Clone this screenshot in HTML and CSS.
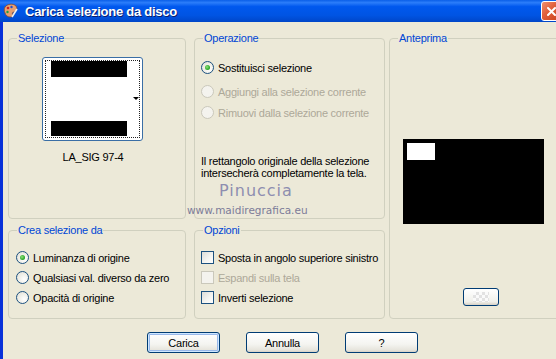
FILE: index.html
```html
<!DOCTYPE html>
<html lang="it">
<head>
    <meta charset="UTF-8">
    <title>Carica selezione da disco</title>
    <link rel="stylesheet" href="styles.css">
</head>
<body>
<div class="window">
    <div class="titlebar">
        <svg class="app-icon" width="16" height="16" viewBox="0 0 16 16">
            <path d="M2 4 C4 1 10 0 13 3 C15 6 13 9 11 9 C9 9 9 11 10 13 C8 15 3 14 2 10 C1 8 1 6 2 4 Z" fill="#e8a070" stroke="#8a4a2a" stroke-width="0.8"/>
            <circle cx="5" cy="5" r="1.3" fill="#d02020"/>
            <circle cx="8.5" cy="4" r="1.2" fill="#2050d0"/>
            <circle cx="4.5" cy="9" r="1.2" fill="#20a040"/>
            <path d="M9 14 L14 6" stroke="#f0f0f0" stroke-width="1.6"/>
        </svg>
        <span class="title">Carica selezione da disco</span>
        <span class="close-btn">
            <svg width="15" height="15" viewBox="0 0 15 15">
                <path d="M4 4 L11 11 M11 4 L4 11" stroke="#fff" stroke-width="2" stroke-linecap="round"/>
            </svg>
        </span>
    </div>
    <div class="content">
        <div class="groups">
            <fieldset class="group group-selezione">
                <legend>Selezione</legend>
                <div class="thumb">
                    <div class="thumb-inner">
                        <div class="bar"></div>
                        <div class="bar"></div>
                    </div>
                    <span class="thumb-arrow"></span>
                </div>
                <div class="thumb-label">LA_SIG 97-4</div>
            </fieldset>

            <fieldset class="group group-operazione">
                <legend>Operazione</legend>
                <label class="opt opt-first"><span class="radio checked"></span>Sostituisci selezione</label>
                <label class="opt opt-second disabled"><span class="radio"></span>Aggiungi alla selezione corrente</label>
                <label class="opt opt-third disabled"><span class="radio"></span>Rimuovi dalla selezione corrente</label>
                <p class="note">Il rettangolo originale della selezione intersecherà completamente la tela.</p>
                <div class="watermark">
                    <span class="wm-name">Pinuccia</span>
                    <span class="wm-site">www.maidiregrafica.eu</span>
                </div>
            </fieldset>

            <fieldset class="group group-anteprima">
                <legend>Anteprima</legend>
                <div class="preview">
                    <div class="preview-sel"></div>
                </div>
                <div class="preview-btn-row">
                    <span class="small-btn"><span class="checker"></span></span>
                </div>
            </fieldset>

            <fieldset class="group group-crea">
                <legend>Crea selezione da</legend>
                <label class="opt"><span class="radio checked"></span>Luminanza di origine</label>
                <label class="opt"><span class="radio"></span>Qualsiasi val. diverso da zero</label>
                <label class="opt"><span class="radio"></span>Opacità di origine</label>
            </fieldset>

            <fieldset class="group group-opzioni">
                <legend>Opzioni</legend>
                <label class="opt"><span class="check"></span>Sposta in angolo superiore sinistro</label>
                <label class="opt disabled"><span class="check"></span>Espandi sulla tela</label>
                <label class="opt"><span class="check"></span>Inverti selezione</label>
            </fieldset>
        </div>

        <div class="buttons">
            <button class="btn btn-default">Carica</button>
            <button class="btn">Annulla</button>
            <button class="btn">?</button>
        </div>
    </div>
</div>
</body>
</html>
```

FILE: styles.css
```css
* {
    box-sizing: border-box;
}

body {
    margin: 0;
    width: 556px;
    height: 359px;
    overflow: hidden;
    background: #ece9d8;
    font-family: Tahoma, "Liberation Sans", Arial, sans-serif;
    font-size: 11px;
    letter-spacing: -0.25px;
    color: #000;
}

.window {
    width: 580px;
    height: 359px;
    background: #ece9d8;
}

/* Title bar */
.titlebar {
    height: 22px;
    display: flex;
    align-items: center;
    padding-left: 3px;
    background: linear-gradient(to bottom, #0a5fe8 0%, #2b7dfa 12%, #0058ee 30%, #0054e3 70%, #0046c8 100%);
    position: relative;
}

.app-icon {
    margin-right: 6px;
    flex-shrink: 0;
}

.title {
    color: #fff;
    font-family: "Liberation Sans", Arial, sans-serif;
    font-weight: bold;
    font-size: 13px;
    letter-spacing: -0.25px;
    text-shadow: 1px 1px 0 #0a1e6e;
}

.close-btn {
    position: absolute;
    left: 541px;
    top: 1px;
    width: 21px;
    height: 20px;
    border: 1px solid #fff;
    border-radius: 3px;
    background: linear-gradient(135deg, #f09070 0%, #e2613e 40%, #c8401c 100%);
    display: flex;
    align-items: center;
    padding-left: 2px;
}

/* Content */
.content {
    height: 337px;
    border-left: 3px solid #0831d9;
    padding: 10px 0 0 5px;
}

.groups {
    display: grid;
    grid-template-columns: 178px 191px 180px;
    grid-template-rows: 187px 95px;
    column-gap: 8px;
    row-gap: 5px;
}

.group {
    margin: 0;
    padding: 0 6px;
    border: 1px solid #d0d0bf;
    border-radius: 4px;
    position: relative;
    min-width: 0;
}

.group legend {
    color: #0046d5;
    padding: 0 1px;
    margin-left: 2px;
    line-height: 13px;
    height: 13px;
}

.group-anteprima {
    grid-column: 3;
    grid-row: 1 / span 2;
    margin-left: -4px;
}

.group-crea {
    grid-column: 1;
    grid-row: 2;
}

.group-opzioni {
    grid-column: 2;
    grid-row: 2;
}

/* Selection thumbnail */
.thumb {
    width: 101px;
    height: 84px;
    margin: 12px 0 0 27px;
    border: 1px solid #3a6ea5;
    border-radius: 3px;
    background: #fff;
    padding: 2px;
    position: relative;
}

.thumb-inner {
    height: 100%;
    border: 1px dotted #222;
    padding: 0 12px 0 5px;
    display: flex;
    flex-direction: column;
    justify-content: space-between;
}

.bar {
    height: 16px;
    background: #000;
}

.bar:last-child {
    height: 15px;
    margin-bottom: 1px;
}

.thumb-arrow {
    position: absolute;
    right: 3px;
    top: 39px;
    border-left: 3px solid transparent;
    border-right: 3px solid transparent;
    border-top: 3px solid #000;
}

.thumb-label {
    text-align: center;
    margin-top: 10px;
    padding-right: 8px;
}

/* Options */
.opt {
    display: flex;
    align-items: center;
    height: 13px;
    white-space: nowrap;
}

.opt.disabled {
    color: #aca899;
}

.group-operazione .opt-first {
    margin-top: 16px;
}

.group-operazione .opt-second {
    margin-top: 11px;
}

.group-operazione .opt-third {
    margin-top: 8px;
}

.group-crea .opt,
.group-opzioni .opt {
    margin-top: 7px;
}

.group-crea .opt:first-of-type,
.group-opzioni .opt:first-of-type {
    margin-top: 14px;
}

.group-crea .opt {
    padding-left: 1px;
}

.radio {
    width: 13px;
    height: 13px;
    border: 1px solid #1c5180;
    border-radius: 50%;
    background: radial-gradient(circle at 65% 65%, #fff 0%, #f0efe8 50%, #dcdbd3 100%);
    margin-right: 4px;
    flex-shrink: 0;
    position: relative;
}

.radio.checked::after {
    content: "";
    position: absolute;
    left: 3px;
    top: 3px;
    width: 5px;
    height: 5px;
    border-radius: 50%;
    background: radial-gradient(circle at 40% 40%, #8ee07a 0%, #21a121 70%);
}

.disabled .radio {
    border-color: #cac8bb;
    background: #f4f3ee;
}

.check {
    width: 13px;
    height: 13px;
    border: 1px solid #1c5180;
    background: linear-gradient(135deg, #dcdcd7 0%, #f5f5f2 60%, #fff 100%);
    margin-right: 4px;
    flex-shrink: 0;
}

.disabled .check {
    border-color: #cac8bb;
    background: #f4f3ee;
}

.note {
    margin: 36px 0 0 0;
    line-height: 12px;
    width: 180px;
}

.watermark {
    position: absolute;
    left: -8px;
    top: 138px;
    display: flex;
    flex-direction: column;
    align-items: flex-start;
    color: #8e8eb0;
    letter-spacing: 0;
    pointer-events: none;
}

.wm-name {
    font-family: "DejaVu Sans", sans-serif;
    font-size: 16px;
    letter-spacing: 1px;
    margin-left: 32px;
    line-height: 16px;
}

.wm-site {
    font-family: "DejaVu Sans", sans-serif;
    font-size: 10.5px;
    line-height: 14px;
    margin-top: 4px;
    color: #7c7c98;
}

/* Preview */
.preview {
    width: 141px;
    height: 85px;
    margin: 94px 0 0 7px;
    background: #000;
    padding: 4px;
}

.preview-sel {
    width: 28px;
    height: 17px;
    background: #fff;
}

.preview-btn-row {
    margin-top: 64px;
    padding-left: 67px;
}

.small-btn {
    display: flex;
    align-items: center;
    justify-content: center;
    width: 36px;
    height: 18px;
    border: 1px solid #003c74;
    border-radius: 3px;
    background: linear-gradient(to bottom, #fff 0%, #f0f0ea 80%, #d6d0c5 100%);
}

.checker {
    width: 16px;
    height: 10px;
    background:
        repeating-conic-gradient(#e2e2e2 0% 25%, #fafafa 0% 50%) 0 0 / 6px 6px;
}

/* Buttons */
.buttons {
    display: flex;
    gap: 26px;
    margin: 13px 0 0 139px;
}

.btn {
    width: 73px;
    height: 21px;
    padding: 0;
    font-family: inherit;
    font-size: 11px;
    letter-spacing: -0.25px;
    color: #000;
    border: 1px solid #003c74;
    border-radius: 3px;
    background: linear-gradient(to bottom, #fff 0%, #f4f4f0 60%, #e6e4dc 90%, #d6d0c5 100%);
}

.btn-default {
    box-shadow: inset 0 0 0 1px #cee7ff, inset 0 0 0 2px #98b8ea;
}
```
